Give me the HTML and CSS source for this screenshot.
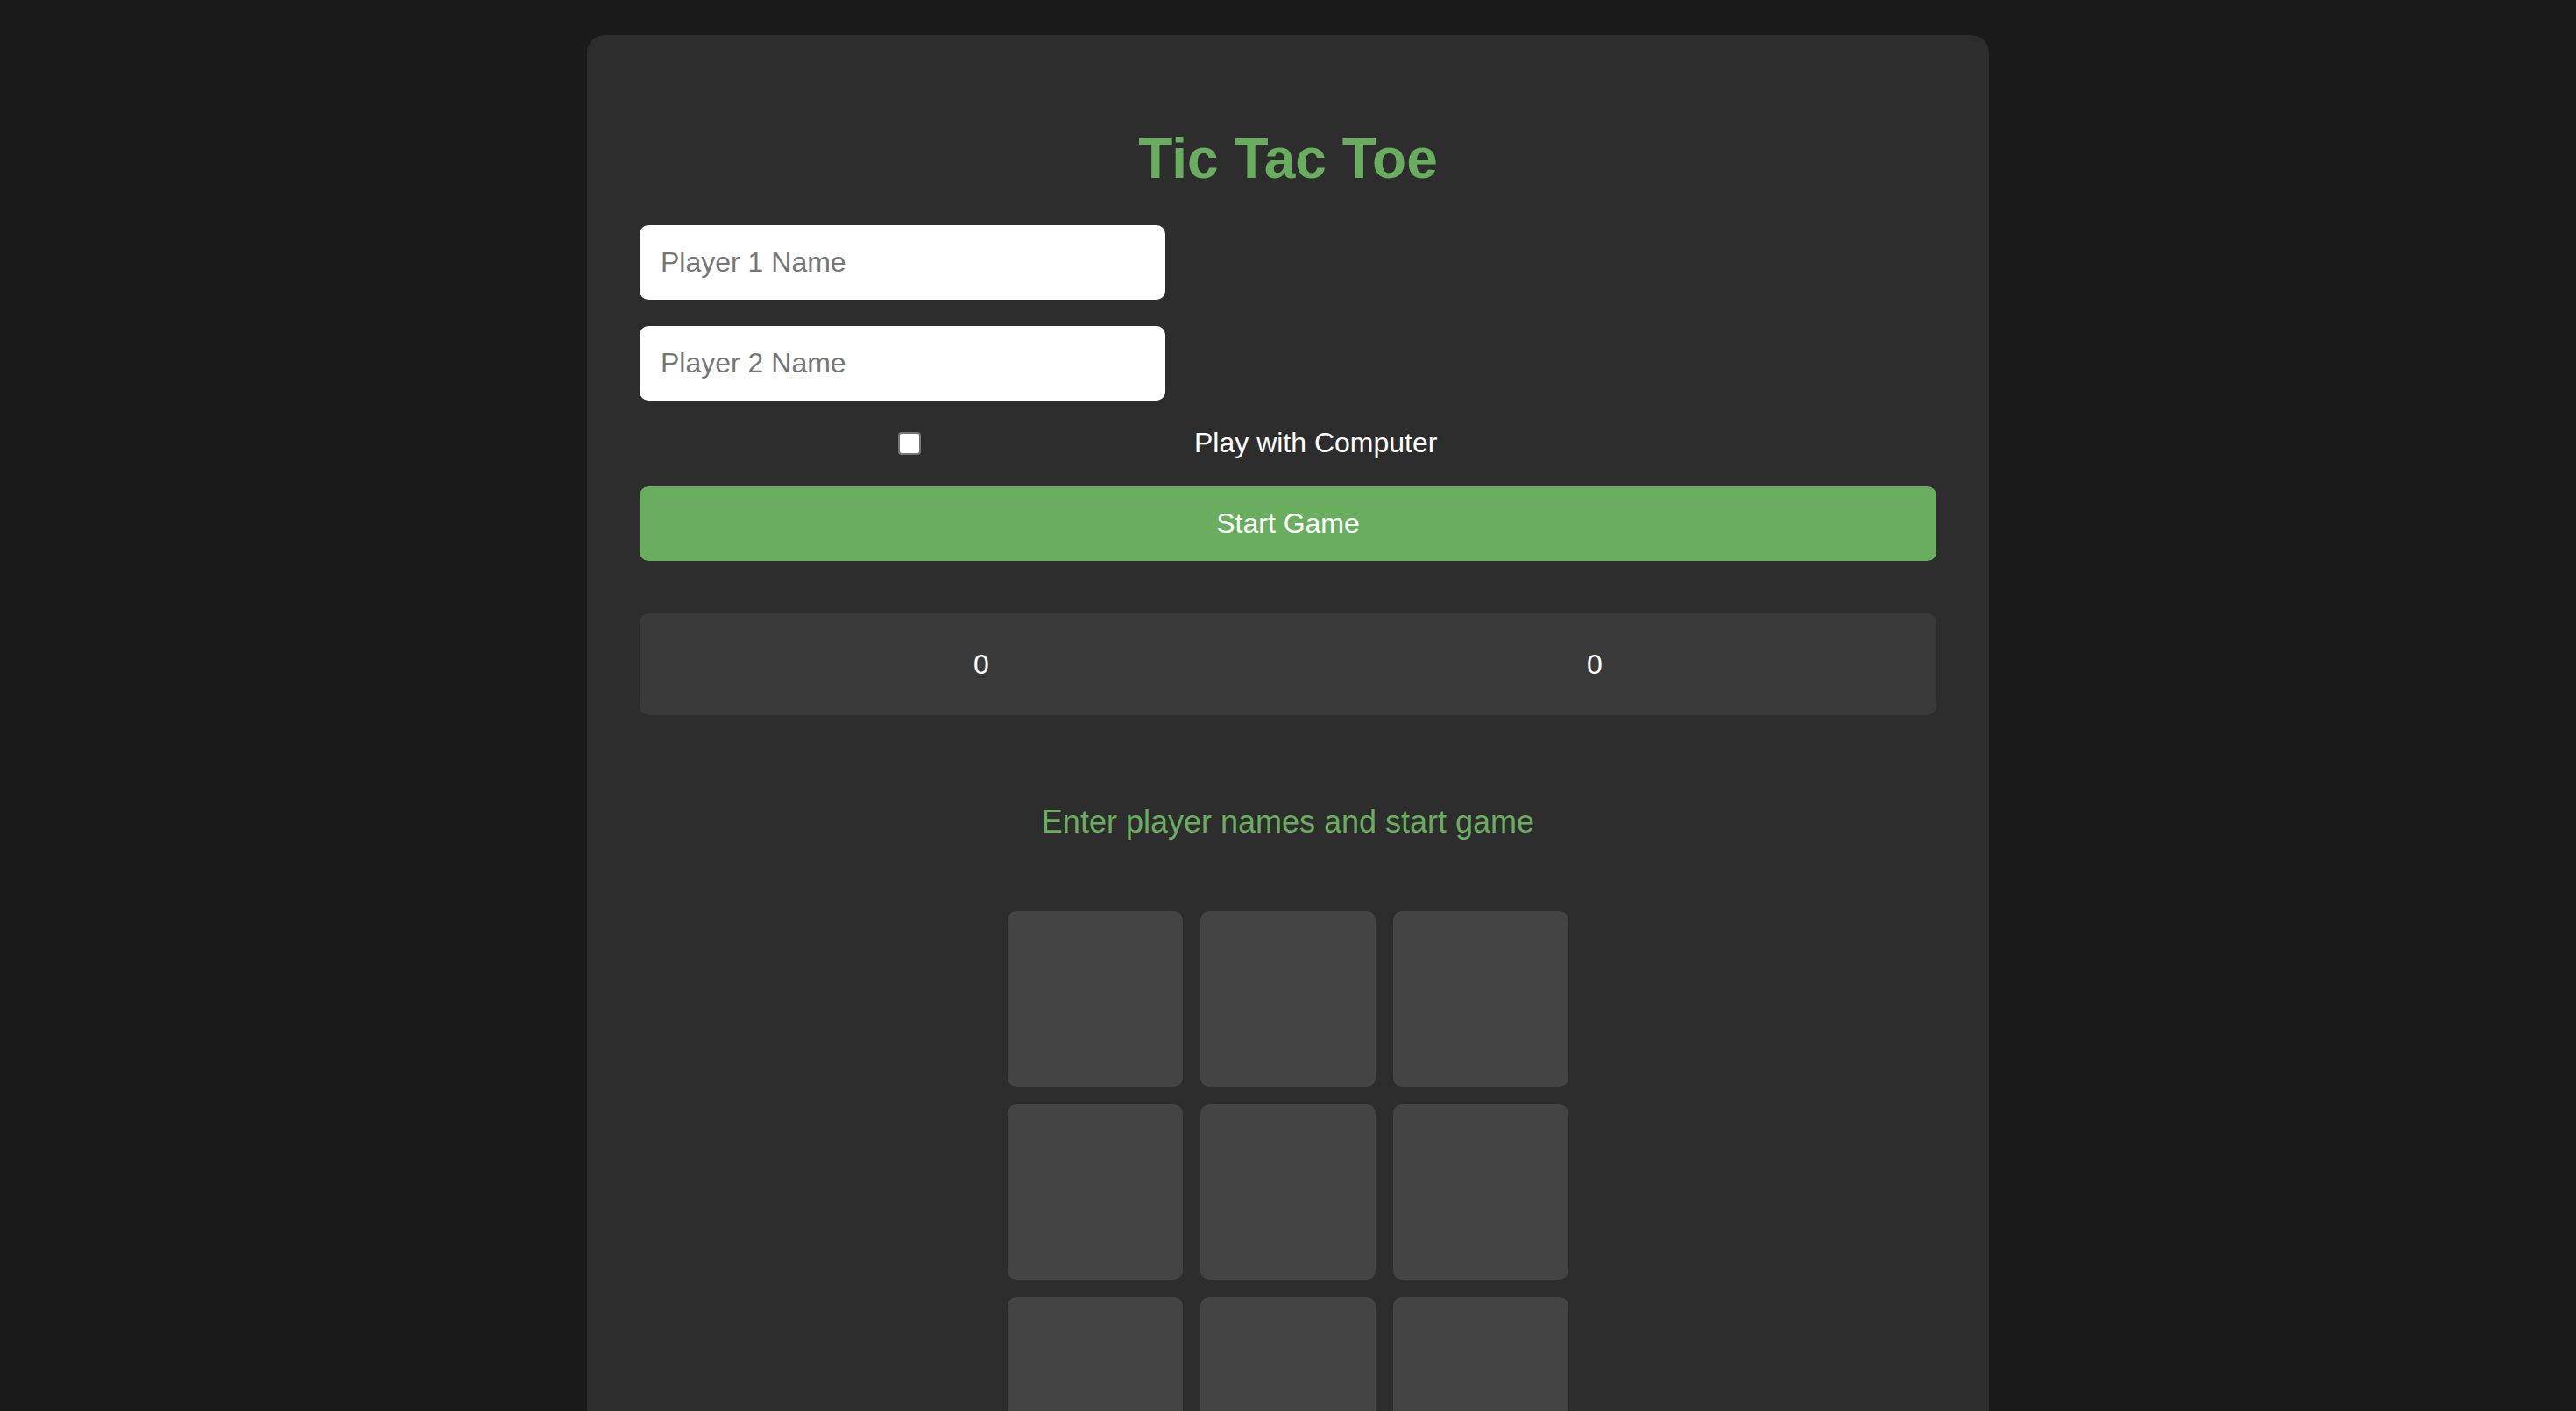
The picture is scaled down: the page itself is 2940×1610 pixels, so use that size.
FILE: index.html
```html
<!DOCTYPE html>
<html lang="en">
<head>
<meta charset="utf-8">
<title>Tic Tac Toe</title>
<link rel="stylesheet" href="styles.css">
</head>
<body>
<div class="container">
  <h1 class="title">Tic Tac Toe</h1>
  <div class="setup">
    <input class="name-input" type="text" placeholder="Player 1 Name">
    <input class="name-input" type="text" placeholder="Player 2 Name">
    <label class="computer-row">
      <span class="check-wrap"><input class="check" type="checkbox"></span>
      <span class="check-label">Play with Computer</span>
    </label>
    <button class="start-btn" type="button">Start Game</button>
  </div>
  <div class="scores">
    <div class="score">0</div>
    <div class="score">0</div>
  </div>
  <div class="message">Enter player names and start game</div>
  <div class="board">
    <div class="cell"></div><div class="cell"></div><div class="cell"></div>
    <div class="cell"></div><div class="cell"></div><div class="cell"></div>
    <div class="cell"></div><div class="cell"></div><div class="cell"></div>
  </div>
</div>
</body>
</html>
```
FILE: styles.css
```css
html, body {
  margin: 0;
  padding: 0;
  background: #1a1a1a;
  font-family: "Liberation Sans", Arial, sans-serif;
  color: #ffffff;
}

.container {
  width: 1600px;
  box-sizing: border-box;
  margin: 40px auto;
  padding: 60px;
  background: #2d2d2d;
  border-radius: 20px;
}

.title {
  margin: 45px 0 38px;
  font-size: 64px;
  font-weight: bold;
  line-height: 73.6px;
  text-align: center;
  color: #69ae5f;
}

.setup {
  display: flex;
  flex-direction: column;
  align-items: flex-start;
  gap: 30px;
}

.name-input {
  box-sizing: border-box;
  width: 600px;
  height: 85px;
  padding: 0 24px;
  border: none;
  border-radius: 10px;
  background: #ffffff;
  font-family: "Liberation Sans", Arial, sans-serif;
  font-size: 32px;
  color: #222;
  outline: none;
}

.name-input::placeholder {
  color: #757575;
}

.computer-row {
  display: flex;
  align-items: center;
  height: 38px;
}

.check-wrap {
  display: flex;
  justify-content: center;
  align-items: center;
  width: 616px;
}

.check {
  appearance: none;
  -webkit-appearance: none;
  box-sizing: border-box;
  width: 26px;
  height: 26px;
  margin: 0;
  border: 2px solid #767676;
  border-radius: 4px;
  background: #ffffff;
}

.check-label {
  margin-left: 17px;
  font-size: 32px;
  line-height: 36.8px;
  color: #ffffff;
}

.start-btn {
  width: 100%;
  height: 85px;
  border: none;
  border-radius: 10px;
  background: #69ae5f;
  color: #ffffff;
  font-family: "Liberation Sans", Arial, sans-serif;
  font-size: 32px;
  padding: 0;
}

.scores {
  display: flex;
  margin-top: 60px;
  padding: 40px;
  background: #3a3a3a;
  border-radius: 10px;
}

.score {
  flex: 1;
  text-align: center;
  font-size: 32px;
  line-height: 36.8px;
}

.message {
  margin: 101px 0 81px;
  text-align: center;
  font-size: 36px;
  line-height: 41.4px;
  color: #69ae5f;
}

.board {
  display: grid;
  grid-template-columns: repeat(3, 200px);
  grid-auto-rows: 200px;
  gap: 20px;
  justify-content: center;
}

.cell {
  background: #444444;
  border-radius: 10px;
}
```
